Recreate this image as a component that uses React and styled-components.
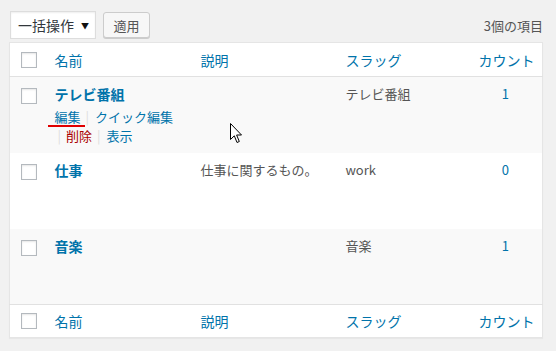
import React from 'react';
import styled, { createGlobalStyle } from 'styled-components';

const GlobalStyle = createGlobalStyle`
  html, body {
    margin: 0;
    padding: 0;
    background: #f1f1f1;
  }
  body {
    font-family: "Noto Sans CJK JP", "Noto Sans", "Liberation Sans", sans-serif;
    color: #444;
  }
`;

const terms = [
  { name: 'テレビ番組', desc: '', slug: 'テレビ番組', count: 1, hover: true },
  { name: '仕事', desc: '仕事に関するもの。', slug: 'work', count: 0 },
  { name: '音楽', desc: '', slug: '音楽', count: 1 },
];

const App = () => {
  return (
    <Page>
      <GlobalStyle />
      <TableNav>
        <Actions>
          <BulkSelect>
            <span>一括操作</span>
            <Arrow>▼</Arrow>
          </BulkSelect>
          <ApplyButton>適用</ApplyButton>
        </Actions>
        <ItemCount>3個の項目</ItemCount>
      </TableNav>

      <ListTable>
        <colgroup>
          <col style={{ width: 35 }} />
          <col style={{ width: 146 }} />
          <col style={{ width: 145 }} />
          <col style={{ width: 133 }} />
          <col style={{ width: 74 }} />
        </colgroup>
        <thead>
          <HeadRow>
            <CheckCell as="th">
              <Checkbox />
            </CheckCell>
            <HeadCell>名前</HeadCell>
            <HeadCell>説明</HeadCell>
            <HeadCell>スラッグ</HeadCell>
            <HeadCell center>カウント</HeadCell>
          </HeadRow>
        </thead>
        <tbody>
          {terms.map((t, i) => (
            <Row key={t.name} alt={i % 2 === 0}>
              <CheckCell>
                <Checkbox />
              </CheckCell>
              <Cell>
                <RowTitle>{t.name}</RowTitle>
                {t.hover && (
                  <RowActions>
                    <ActionLine>
                      <EditLink>編集</EditLink>
                      <Sep>|</Sep>
                      <ActionLink>クイック編集</ActionLink>
                    </ActionLine>
                    <ActionLine indent>
                      <Sep first>|</Sep>
                      <ActionLink danger>削除</ActionLink>
                      <Sep>|</Sep>
                      <ActionLink>表示</ActionLink>
                    </ActionLine>
                  </RowActions>
                )}
              </Cell>
              <Cell>
                {t.desc}
                {t.hover && (
                  <Cursor width="13" height="21" viewBox="0 0 13 21">
                    <path
                      d="M0.5 0.5 L0.5 16.5 L4.3 12.8 L7 19.5 L9.3 18.5 L6.6 12 L11.5 12 Z"
                      fill="#fff"
                      stroke="#000"
                      strokeWidth="1"
                      strokeLinejoin="miter"
                    />
                  </Cursor>
                )}
              </Cell>
              <Cell>{t.slug}</Cell>
              <Cell center>
                <CountLink>{t.count}</CountLink>
              </Cell>
            </Row>
          ))}
        </tbody>
        <tfoot>
          <FootRow>
            <CheckCell as="th">
              <Checkbox />
            </CheckCell>
            <HeadCell>名前</HeadCell>
            <HeadCell>説明</HeadCell>
            <HeadCell>スラッグ</HeadCell>
            <HeadCell center>カウント</HeadCell>
          </FootRow>
        </tfoot>
      </ListTable>
    </Page>
  );
};

const Page = styled.div`
  width: 556px;
  height: 351px;
  box-sizing: border-box;
  padding: 11px 14px 0 9px;
`;

const TableNav = styled.div`
  display: flex;
  align-items: center;
  justify-content: space-between;
  height: 28px;
  margin-bottom: 3px;
`;

const Actions = styled.div`
  display: flex;
  align-items: flex-start;
  gap: 7px;
  padding-left: 1px;
  height: 28px;
`;

const BulkSelect = styled.div`
  box-sizing: border-box;
  width: 86px;
  height: 28px;
  display: flex;
  align-items: center;
  justify-content: space-between;
  padding: 0 6px 0 7px;
  background: #fff;
  border: 1px solid #ddd;
  box-shadow: inset 0 1px 2px rgba(0, 0, 0, 0.07);
  font-size: 14px;
  color: #32373c;
`;

const Arrow = styled.span`
  font-size: 8px;
  color: #111;
  margin-top: 1px;
`;

const ApplyButton = styled.div`
  box-sizing: border-box;
  margin-top: 1px;
  width: 47px;
  height: 26px;
  display: flex;
  align-items: center;
  justify-content: center;
  background: #f7f7f7;
  border: 1px solid #ccc;
  border-radius: 3px;
  box-shadow: 0 1px 0 #ccc;
  font-size: 13px;
  color: #555;
`;

const ItemCount = styled.div`
  font-size: 13px;
  color: #555;
  margin-right: -1px;
  margin-top: 1px;
`;

const ListTable = styled.table`
  width: 533px;
  table-layout: fixed;
  border-collapse: collapse;
  border-spacing: 0;
  background: #fff;
  border: 1px solid #e5e5e5;
  box-shadow: 0 1px 1px rgba(0, 0, 0, 0.04);
`;

const HeadRow = styled.tr`
  height: 34px;
  border-bottom: 1px solid #e1e1e1;
`;

const FootRow = styled.tr`
  height: 33px;
  border-top: 1px solid #e1e1e1;
`;

const HeadCell = styled.th`
  padding: 0 10px;
  text-align: ${({ center }) => (center ? 'center' : 'left')};
  font-weight: 400;
  font-size: 14px;
  line-height: 18px;
  color: #0073aa;
  vertical-align: middle;
  white-space: nowrap;
`;

const Row = styled.tr`
  height: 76px;
  background: ${({ alt }) => (alt ? '#f9f9f9' : '#fff')};
`;

const CheckCell = styled.td`
  padding: 0 0 0 11px;
  vertical-align: middle;
  tbody & {
    vertical-align: top;
    padding-top: 11px;
  }
`;

const Checkbox = styled.span`
  display: block;
  box-sizing: border-box;
  width: 16px;
  height: 16px;
  background: #fff;
  border: 1px solid #b4b9be;
  box-shadow: inset 0 1px 2px rgba(0, 0, 0, 0.1);
`;

const Cell = styled.td`
  position: relative;
  padding: 8px 10px 0;
  vertical-align: top;
  text-align: ${({ center }) => (center ? 'center' : 'left')};
  font-size: 13px;
  line-height: 18px;
  color: #555;
  white-space: nowrap;
`;

const RowTitle = styled.div`
  font-size: 14px;
  font-weight: 700;
  line-height: 18px;
  color: #0073aa;
`;

const RowActions = styled.div`
  padding-top: 4px;
  font-size: 13px;
  line-height: 19px;
`;

const ActionLine = styled.div`
  display: flex;
  align-items: center;
  padding-left: ${({ indent }) => (indent ? '3px' : '0')};
`;

const ActionLink = styled.span`
  color: ${({ danger }) => (danger ? '#a00' : '#0073aa')};
`;

const EditLink = styled(ActionLink)`
  position: relative;
  &::after {
    content: '';
    position: absolute;
    left: -7px;
    width: 37px;
    bottom: -1px;
    height: 2px;
    background: #e00000;
  }
`;

const Sep = styled.span`
  color: #ddd;
  margin: ${({ first }) => (first ? '0 5px 0 0' : '0 6px 0 5px')};
`;

const CountLink = styled.span`
  color: #0073aa;
`;

const Cursor = styled.svg`
  position: absolute;
  left: 39px;
  top: 46px;
`;

export default App;
